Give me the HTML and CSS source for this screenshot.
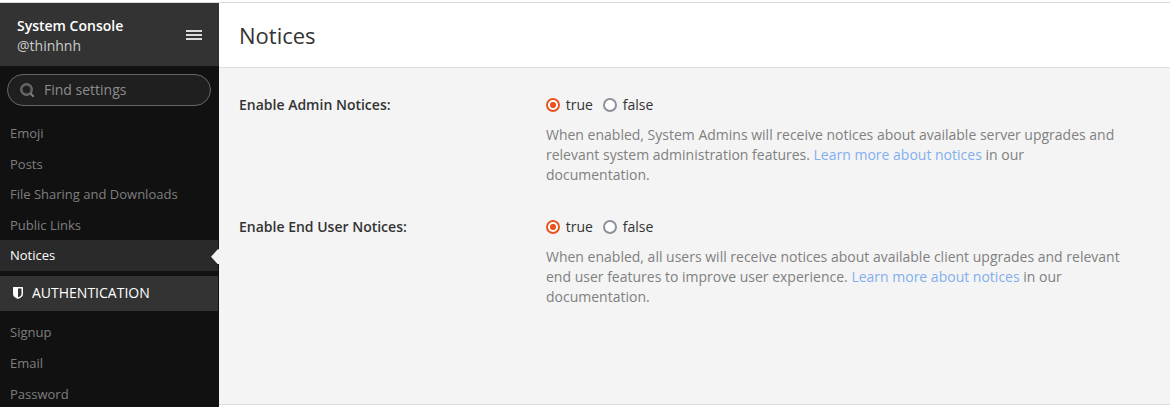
FILE: index.html
```html
<!DOCTYPE html>
<html lang="en">
<head>
<meta charset="utf-8">
<title>System Console</title>
<link rel="stylesheet" href="styles.css">
</head>
<body>
<div class="console">
  <aside class="sidebar">
    <header class="team-header">
      <div class="team-info">
        <div class="team-title">System Console</div>
        <div class="team-user">@thinhnh</div>
      </div>
      <svg class="menu-icon" width="16" height="10" viewBox="0 0 16 10"><path fill="#ddd" d="M0 0h16v2H0zM0 4h16v2H0zM0 8h16v2H0z"/></svg>
    </header>
    <div class="search">
      <svg width="15" height="15" viewBox="0 0 15 15" fill="none"><circle cx="6.500" cy="6.500" r="5" stroke="#5c5c5c" stroke-width="2.400"/><circle cx="6.500" cy="6.500" r="5.900" stroke="#7c7c7c" stroke-width=".7"/><path d="M10.300 10.300l3.400 3.400" stroke="#7c7c7c" stroke-width="2.200"/></svg>
      <span>Find settings</span>
    </div>
    <nav>
      <ul class="nav-list">
        <li>Emoji</li>
        <li>Posts</li>
        <li>File Sharing and Downloads</li>
        <li>Public Links</li>
        <li class="active">Notices</li>
      </ul>
      <div class="category">
        <svg width="10" height="12" viewBox="0 0 10 12"><path fill="#fff" fill-rule="evenodd" d="M0 .6Q0 0 .6 0h8.800q.6 0 .6.6V7c0 2.600-2.200 3.900-5 5-2.800-1.100-5-2.400-5-5zM5 1.500v8.800C7 9.400 8.500 8.600 8.500 7V1.500z"/></svg>
        <span>AUTHENTICATION</span>
      </div>
      <ul class="nav-list">
        <li>Signup</li>
        <li>Email</li>
        <li>Password</li>
      </ul>
    </nav>
  </aside>
  <main class="content">
    <h1 class="page-title">Notices</h1>
    <div class="settings">
      <section class="setting">
        <div class="setting-label">Enable Admin Notices:</div>
        <div class="setting-body">
          <div class="options">
            <span class="radio checked"></span><span class="option-text">true</span>
            <span class="radio"></span><span class="option-text">false</span>
          </div>
          <p class="help">When enabled, System Admins will receive notices about available server upgrades and relevant system administration features. <a>Learn more about notices</a> in our documentation.</p>
        </div>
      </section>
      <section class="setting">
        <div class="setting-label">Enable End User Notices:</div>
        <div class="setting-body">
          <div class="options">
            <span class="radio checked"></span><span class="option-text">true</span>
            <span class="radio"></span><span class="option-text">false</span>
          </div>
          <p class="help">When enabled, all users will receive notices about available client upgrades and relevant end user features to improve user experience. <a>Learn more about notices</a> in our documentation.</p>
        </div>
      </section>
    </div>
  </main>
</div>
</body>
</html>
```
FILE: styles.css
```css
* { box-sizing: border-box; }
body {
  margin: 0;
  padding-top: 2px;
  height: 407px;
  overflow: hidden;
  background: #fff;
  color: #333;
  font: 14px/20px "Open Sans", sans-serif;
}
.console {
  display: flex;
  height: 405px;
  border-top: 1px solid #d9d9d9;
}
.sidebar {
  width: 219px;
  flex: none;
  background: #111;
  overflow: hidden;
}
.team-header {
  display: flex;
  align-items: center;
  justify-content: space-between;
  height: 63px;
  padding: 2px 17px 0;
  background: #333;
  color: #fff;
}
.team-info { padding-top: 1px; }
.team-title { font-weight: 600; }
.team-user { color: #ccc; }
.menu-icon { margin-top: -1px; }
.search {
  display: flex;
  align-items: center;
  gap: 9px;
  width: 204px;
  height: 32px;
  margin: 8px 0 0 7px;
  padding-left: 12px;
  border: 1px solid #666;
  border-radius: 16px;
  background: #1f1f1f;
  color: #8c8c8c;
}
.nav-list {
  margin: 0;
  padding: 0;
  list-style: none;
  font-size: 13px;
  line-height: 18.57px;
  color: #7f7f7f;
}
nav { padding-top: 12px; }
.nav-list li {
  width: 218px;
  padding: 6px 10px;
}
.category + .nav-list { line-height: 18.7px; }
.nav-list .active {
  position: relative;
  background: #2a2a2a;
  color: #fff;
}
.active::after {
  content: "";
  position: absolute;
  right: -1px;
  top: 9px;
  width: 8px;
  height: 15px;
  background: #f4f4f4;
  clip-path: polygon(100% 0, 85% 0, 0 50%, 85% 100%, 100% 100%);
}
.category {
  display: flex;
  align-items: center;
  gap: 9px;
  width: 218px;
  height: 35px;
  margin: 5px 0 6.5px;
  padding-left: 13px;
  background: #333;
  color: #fff;
}
.content {
  flex: 1;
  min-width: 0;
}
.page-title {
  height: 65px;
  margin: 0;
  padding-left: 20px;
  border-bottom: 1px solid #e0e0e0;
  font-size: 22px;
  font-weight: 400;
  line-height: 64px;
}
.settings {
  height: 337px;
  padding: 27px 20px 0;
  border-bottom: 1px solid #ddd;
  background: #f4f4f4;
}
.setting {
  display: flex;
  margin-bottom: 32px;
}
.setting-label {
  width: 307px;
  flex: none;
  font-weight: 600;
}
.setting-body { width: 582px; }
.options {
  display: flex;
  align-items: center;
}
.radio {
  width: 14px;
  height: 14px;
  border: 2px solid #8f8f9d;
  border-radius: 50%;
  background: #fff;
}
.radio.checked {
  border-color: #e95420;
  background: radial-gradient(circle, #e95420 2.8px, #fff 3.4px);
}
.option-text { margin: 0 10.2px 0 5.7px; }
.help {
  margin: 10px 0 0;
  color: #808080;
}
.help a { color: #83afef; }
```
